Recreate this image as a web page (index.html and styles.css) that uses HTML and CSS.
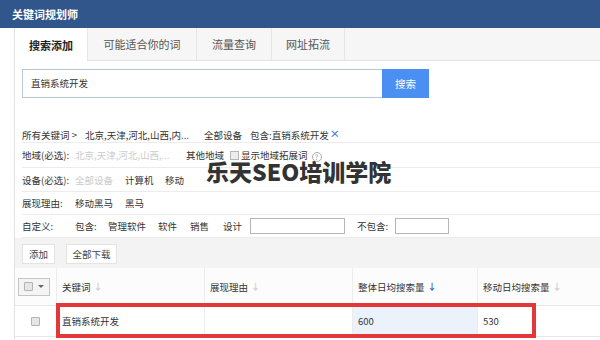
FILE: index.html
```html
<!DOCTYPE html>
<html>
<head>
<meta charset="utf-8">
<link rel="stylesheet" href="styles.css">
</head>
<body>
<div class="page">
  <div class="topbar">关键词规划师</div>
  <div class="main">
    <div class="tabs">
      <div class="tab active">搜索添加</div>
      <div class="tab">可能适合你的词</div>
      <div class="tab">流量查询</div>
      <div class="tab">网址拓流</div>
    </div>
    <div class="search">
      <div class="sinput">直销系统开发</div>
      <div class="sbtn">搜索</div>
    </div>
    <div class="filters">
      <div class="frow r1">
        <span class="w63">所有关键词 &gt;</span>
        <span class="w119">北京,天津,河北,山西,内...</span>
        <span class="w46">全部设备</span>
        <span>包含:直销系统开发</span><span class="x">×</span>
      </div>
      <div class="frow r2">
        <span class="w53">地域(必选):</span>
        <span class="w111 light">北京,天津,河北,山西,...</span>
        <span class="w44">其他地域</span>
        <span class="cb"></span>
        <span>显示地域拓展词</span>
        <span class="q">?</span>
      </div>
      <div class="frow r3">
        <span class="w53">设备(必选):</span>
        <span class="w50 light">全部设备</span>
        <span class="w40">计算机</span>
        <span>移动</span>
      </div>
      <div class="frow r4">
        <span class="w53">展现理由:</span>
        <span class="w50">移动黑马</span>
        <span>黑马</span>
      </div>
      <div class="frow r5">
        <span class="w53">自定义:</span>
        <span class="w33">包含:</span>
        <span class="w50">管理软件</span>
        <span class="w32">软件</span>
        <span class="w33">销售</span>
        <span class="w27">设计</span>
        <span class="finput wide"></span>
        <span class="w38 ml12">不包含:</span>
        <span class="finput narrow"></span>
      </div>
    </div>
    <div class="actions">
      <div class="btn b1">添加</div>
      <div class="btn b2">全部下载</div>
    </div>
    <div class="table">
      <div class="thead">
        <div class="c c1"><div class="selbox"><span class="mini"></span><span class="caret"></span></div></div>
        <div class="c c2">关键词 <span class="arr">↓</span></div>
        <div class="c c3">展现理由 <span class="arr">↓</span></div>
        <div class="c c4">整体日均搜索量 <span class="arr blue">↓</span></div>
        <div class="c c5">移动日均搜索量 <span class="arr">↓</span></div>
      </div>
      <div class="trow">
        <div class="c c1"><span class="mini"></span></div>
        <div class="c c2">直销系统开发</div>
        <div class="c c3"></div>
        <div class="c c4 hl">600</div>
        <div class="c c5">530</div>
      </div>
    </div>
  </div>
  <div class="redbox"></div>
  <div class="watermark">乐天SEO培训学院</div>
</div>
</body>
</html>
```
FILE: styles.css
```css
* { box-sizing: border-box; }
html, body { margin: 0; padding: 0; }
body {
  width: 600px; height: 340px; overflow: hidden; background: #fff;
  font-family: "Noto Sans CJK SC", "Noto Sans", sans-serif;
  font-size: 9.5px; color: #333;
}
.page { position: relative; width: 600px; height: 340px; }
.topbar {
  height: 28px; background: #30568b; color: #fff;
  font-size: 11px; font-weight: bold; line-height: 28px; padding-left: 12px;
}
.main { margin-left: 14px; border-left: 1px solid #e2e2e2; height: 312px; }
.tabs {
  display: flex; height: 33px; background: #f6f6f6;
  border-bottom: 1px solid #e4e4e4;
}
.tab {
  display: flex; align-items: center; justify-content: center; flex-shrink: 0;
  font-size: 11px; color: #555; border-right: 1px solid #e6e6e6;
}
.tab:nth-child(1) { width: 73px; }
.tab:nth-child(2) { width: 109px; }
.tab:nth-child(3) { width: 75px; }
.tab:nth-child(4) { width: 73px; }
.tab.active { background: #fff; font-weight: bold; color: #222; height: 33px; }
.search { display: flex; margin: 8px 0 0 7px; height: 29px; }
.sinput {
  width: 360px; height: 29px; border: 1px solid #b7c5d6; border-right: none;
  line-height: 27px; padding-left: 8px; font-size: 9.5px; color: #333;
}
.sbtn {
  width: 47px; height: 29px; background: #4b8ff2; color: #fff;
  font-size: 10.5px; line-height: 29px; text-align: center;
}
.filters { margin-top: 28px; padding-left: 7px; }
.frow {
  display: flex; align-items: center; border-bottom: 1px solid #ececec;
  white-space: nowrap; position: relative;
}
.frow > span { flex-shrink: 0; }
.r1 { height: 17px; align-items: flex-start; padding-top: 2px; }
.r2 { height: 25px; }
.r3 { height: 24px; }
.r4 { height: 23px; }
.r5 { height: 23px; }
.w63 { width: 63px; }
.w119 { width: 119px; }
.w46 { width: 46px; }
.w53 { width: 53px; }
.w111 { width: 111px; }
.w44 { width: 44px; }
.w50 { width: 50px; }
.w40 { width: 40px; }
.w33 { width: 33px; }
.w32 { width: 32px; }
.w27 { width: 27px; }
.w38 { width: 38px; }
.ml12 { margin-left: 12px; }
.light { color: #cbcbcb; }
.x { color: #3f7fd6; font-weight: bold; font-size: 10px; margin-left: 1px; line-height: 11px; }
.cb {
  width: 9px; height: 9px; border: 1px solid #b5b5b5; background: #eee;
  margin-right: 2px;
}
.q {
  width: 10px; height: 10px; border: 1px solid #aaa; border-radius: 50%;
  font-size: 7px; line-height: 8px; text-align: center; color: #999;
  margin-left: 4px; margin-top: 4px;
}
.finput { height: 16px; border: 1px solid #b5b5b5; background: #fff; }
.finput.wide { width: 95px; }
.finput.narrow { width: 54px; }
.actions {
  display: flex; gap: 11px; height: 30px; background: #f3f3f3;
  padding: 6px 0 0 7px;
}
.btn {
  height: 20px; background: #fff; border: 1px solid #e3e3e3;
  line-height: 18px; font-size: 9.5px; color: #444; text-align: center;
}
.b1 { width: 33px; }
.b2 { width: 51px; }
.thead, .trow { display: flex; }
.thead { height: 38px; background: #fcfcfc; border-bottom: 1px solid #e6e6e6; }
.trow { height: 31px; border-bottom: 1px solid #e6e6e6; }
.c {
  display: flex; align-items: center; padding-left: 5px; flex-shrink: 0;
  border-right: 1px solid #ececec; white-space: nowrap;
}
.c1 { width: 42px; justify-content: center; padding-left: 0; }
.c2 { width: 148px; }
.c3 { width: 148px; }
.c4 { width: 125px; }
.c5 { width: 121px; border-right: none; }
.hl { background: #ebf2fc; }
.arr { color: #cfcfcf; font-size: 9px; margin-left: 3px; font-weight: bold; }
.arr.blue { color: #3b70c4; }
.selbox {
  width: 32px; height: 18px; border: 1px solid #c5c5c5; background: #f4f4f4;
  display: flex; align-items: center; padding-left: 5px; gap: 5px; margin-left: -4px;
}
.mini {
  display: inline-block; width: 9px; height: 9px; border: 1px solid #b3b3b3;
  background: #e6e6e6; border-radius: 1px;
}
.caret {
  width: 0; height: 0; border-left: 3px solid transparent;
  border-right: 3px solid transparent; border-top: 3px solid #666;
}
.redbox {
  position: absolute; left: 56px; top: 303px; width: 480px; height: 35px;
  border: 4px solid #e3373a;
}
.watermark {
  position: absolute; left: 206px; top: 154px;
  font-family: "Noto Sans CJK SC", sans-serif; font-weight: 900;
  font-size: 23px; color: #333;
  text-shadow: 0 0 2px #fff, 0 0 2px #fff;
}
```
